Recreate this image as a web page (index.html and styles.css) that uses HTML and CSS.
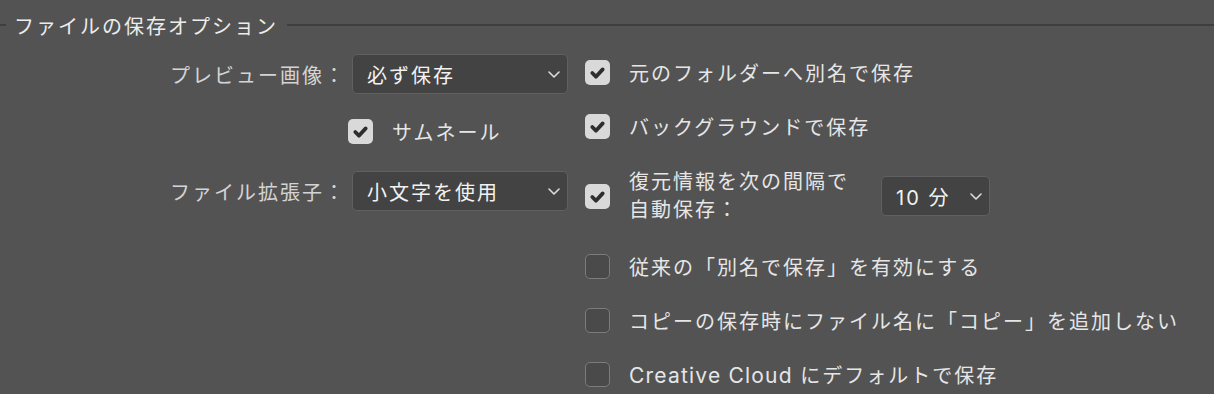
FILE: index.html
```html
<!DOCTYPE html>
<html lang="ja">
<head>
    <meta charset="UTF-8">
    <title>ファイルの保存オプション</title>
    <link rel="stylesheet" href="styles.css">
</head>
<body>

    <!-- Group title -->
    <div class="group-title">
        <span class="rule rule-short"></span>
        <h2>ファイルの保存オプション</h2>
        <span class="rule"></span>
    </div>

    <div class="options">

        <!-- Left column -->
        <div class="left-col">
            <div class="field">
                <label class="field-label">プレビュー画像：</label>
                <div class="select">
                    <span>必ず保存</span>
                    <svg class="chevron" viewBox="0 0 12 7"><path d="M1 1 L6 6 L11 1"/></svg>
                </div>
            </div>
            <div class="field field-check">
                <span class="field-label"></span>
                <div class="check-row">
                    <span class="box checked">
                        <svg viewBox="0 0 24 24"><path d="M7 12.5 L10.5 16 L17 9"/></svg>
                    </span>
                    <span class="check-text">サムネール</span>
                </div>
            </div>
            <div class="field">
                <label class="field-label">ファイル拡張子：</label>
                <div class="select">
                    <span>小文字を使用</span>
                    <svg class="chevron" viewBox="0 0 12 7"><path d="M1 1 L6 6 L11 1"/></svg>
                </div>
            </div>
        </div>

        <!-- Right column -->
        <div class="right-col">
            <div class="check-row row">
                <span class="box checked">
                    <svg viewBox="0 0 24 24"><path d="M7 12.5 L10.5 16 L17 9"/></svg>
                </span>
                <span class="check-text">元のフォルダーへ別名で保存</span>
            </div>
            <div class="check-row row">
                <span class="box checked">
                    <svg viewBox="0 0 24 24"><path d="M7 12.5 L10.5 16 L17 9"/></svg>
                </span>
                <span class="check-text">バックグラウンドで保存</span>
            </div>
            <div class="check-row row row-tall">
                <span class="box checked">
                    <svg viewBox="0 0 24 24"><path d="M7 12.5 L10.5 16 L17 9"/></svg>
                </span>
                <span class="check-text two-line">復元情報を次の間隔で<br>自動保存：</span>
                <div class="select select-small">
                    <span>10 分</span>
                    <svg class="chevron" viewBox="0 0 12 7"><path d="M1 1 L6 6 L11 1"/></svg>
                </div>
            </div>
            <div class="check-row row">
                <span class="box"></span>
                <span class="check-text">従来の「別名で保存」を有効にする</span>
            </div>
            <div class="check-row row">
                <span class="box"></span>
                <span class="check-text">コピーの保存時にファイル名に「コピー」を追加しない</span>
            </div>
            <div class="check-row row">
                <span class="box"></span>
                <span class="check-text"><span class="latin">Creative Cloud</span> にデフォルトで保存</span>
            </div>
        </div>

    </div>

</body>
</html>
```

FILE: styles.css
```css
/* Basic Reset */
* { margin: 0; padding: 0; box-sizing: border-box; }

body {
    font-family: "Inter", "Noto Sans CJK JP", sans-serif;
    font-size: 20px;
    letter-spacing: 2px;
    color: #e6e6e6;
    background-color: #535353;
    width: 1214px;
    height: 394px;
    overflow: hidden;
}

/* Group title with rule */
.group-title {
    height: 45px;
    padding-top: 5px;
    display: flex;
    align-items: center;
}
.group-title h2 {
    font-size: 20px;
    font-weight: normal;
    color: #ececec;
    margin: 0 9px 0 8px;
    white-space: nowrap;
}
.rule {
    flex: 1;
    height: 2px;
    background-color: #3e3e3e;
}
.rule-short {
    flex: 0 0 6px;
}

/* Two columns */
.options {
    display: flex;
}
.left-col {
    width: 585px;
    padding-top: 9px;
}
.right-col {
    flex: 1;
}

/* Left fields */
.field {
    display: flex;
    align-items: center;
}
.field-label {
    width: 346px;
    text-align: right;
    color: #d4d4d4;
    white-space: nowrap;
}
.field-check {
    margin: 23px 0 25px;
}
.field-check .check-row {
    margin-left: 2px;
}

/* Dropdowns */
.select {
    width: 216px;
    height: 40px;
    margin-left: 6px;
    padding: 0 7px 0 14px;
    display: flex;
    align-items: center;
    justify-content: space-between;
    background-color: #434343;
    border: 1px solid #606060;
    border-radius: 5px;
    color: #f2f2f2;
}
.select-small {
    width: 109px;
    margin-left: 30px;
    padding-left: 14px;
}
.chevron {
    width: 12px;
    height: 7px;
    fill: none;
    stroke: #dcdcdc;
    stroke-width: 1.6;
    stroke-linecap: round;
    stroke-linejoin: round;
}

/* Checkboxes */
.check-row {
    display: flex;
    align-items: center;
}
.row {
    height: 54px;
}
.row-tall {
    height: 86px;
}
.box {
    width: 25px;
    height: 25px;
    flex: 0 0 25px;
    border: 1.5px solid #7c7c7c;
    border-radius: 5px;
    background-color: #4a4a4a;
}
.box.checked {
    border: none;
    background-color: #d9d9d9;
}
.box svg {
    display: block;
    width: 25px;
    height: 25px;
    fill: none;
    stroke: #2e2e2e;
    stroke-width: 3.6;
    stroke-linecap: round;
    stroke-linejoin: round;
}
.check-text {
    margin-left: 19px;
    white-space: nowrap;
}
.two-line {
    line-height: 28px;
    width: 222px;
}
.latin {
    font-size: 21px;
    letter-spacing: 1.2px;
}
```
